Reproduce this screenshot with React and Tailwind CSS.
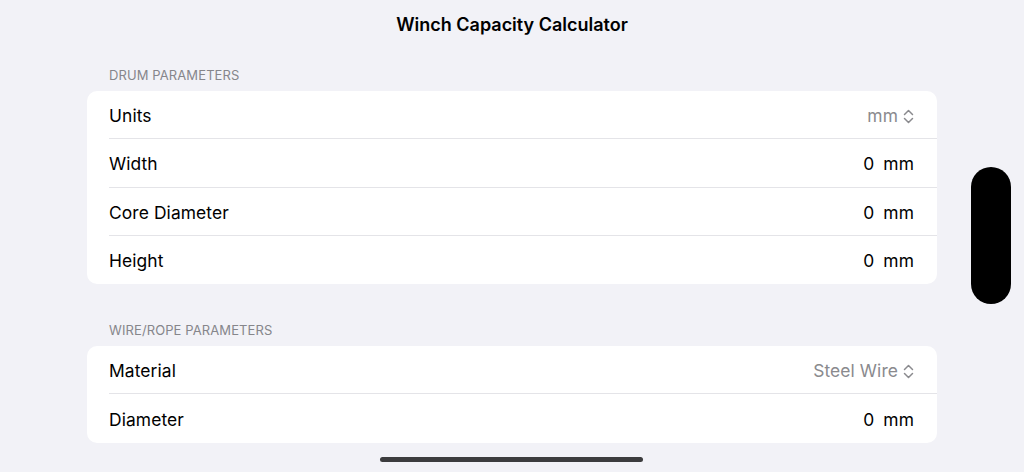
import React from 'react';

const drumRows = [
  { label: 'Units', picker: 'mm' },
  { label: 'Width', value: '0', unit: 'mm' },
  { label: 'Core Diameter', value: '0', unit: 'mm' },
  { label: 'Height', value: '0', unit: 'mm' },
];

const wireRows = [
  { label: 'Material', picker: 'Steel Wire' },
  { label: 'Diameter', value: '0', unit: 'mm' },
];

function UpDown() {
  return (
    <svg width="11" height="15" viewBox="0 0 11 15" fill="none" stroke="#8a8a8e" strokeWidth="1.5" strokeLinecap="round" strokeLinejoin="round" className="ml-[5px]">
      <path d="M1.5 5.5 L5.5 1.5 L9.5 5.5" />
      <path d="M1.5 9.5 L5.5 13.5 L9.5 9.5" />
    </svg>
  );
}

function Row({ row, last }) {
  return (
    <div className="relative flex items-center justify-between h-[48.3px] pt-[2px] pl-[22px] pr-[23px] text-[17.4px] tracking-[0.1px]">
      <span className="text-black">{row.label}</span>
      {row.picker ? (
        <span className="flex items-center text-[#8a8a8e]">
          {row.picker}
          <UpDown />
        </span>
      ) : (
        <span className="text-black">
          {row.value}
          <span className="ml-[9px]">{row.unit}</span>
        </span>
      )}
      {!last && <div className="absolute bottom-0 left-[22px] right-0 h-px bg-[#e4e4e8]" />}
    </div>
  );
}

function Section({ title, rows }) {
  return (
    <div>
      <p className="pl-[22px] text-[13px] uppercase text-[#86868b] leading-4 mb-[8px] tracking-[0.1px]">{title}</p>
      <div className="bg-white rounded-[10px] overflow-hidden">
        {rows.map((r, i) => (
          <Row key={r.label} row={r} last={i === rows.length - 1} />
        ))}
      </div>
    </div>
  );
}

export default function App() {
  return (
    <div
      className="relative w-[1024px] h-[472px] overflow-hidden bg-[#f2f2f7]"
      style={{ fontFamily: 'Inter, "Noto Sans", sans-serif' }}
    >
      <h1 className="pt-[14px] text-center text-[18px] font-semibold text-black leading-[22px]">
        Winch Capacity Calculator
      </h1>
      <div className="ml-[87px] w-[850px] mt-[31px] flex flex-col gap-[38px]">
        <Section title="Drum Parameters" rows={drumRows} />
        <Section title="Wire/Rope Parameters" rows={wireRows} />
      </div>
      <div className="absolute left-[971px] top-[167px] w-[40px] h-[137px] rounded-full bg-black" />
      <div className="absolute left-[380px] top-[457px] w-[263px] h-[5px] rounded-full bg-[#3c3c3e]" />
    </div>
  );
}
